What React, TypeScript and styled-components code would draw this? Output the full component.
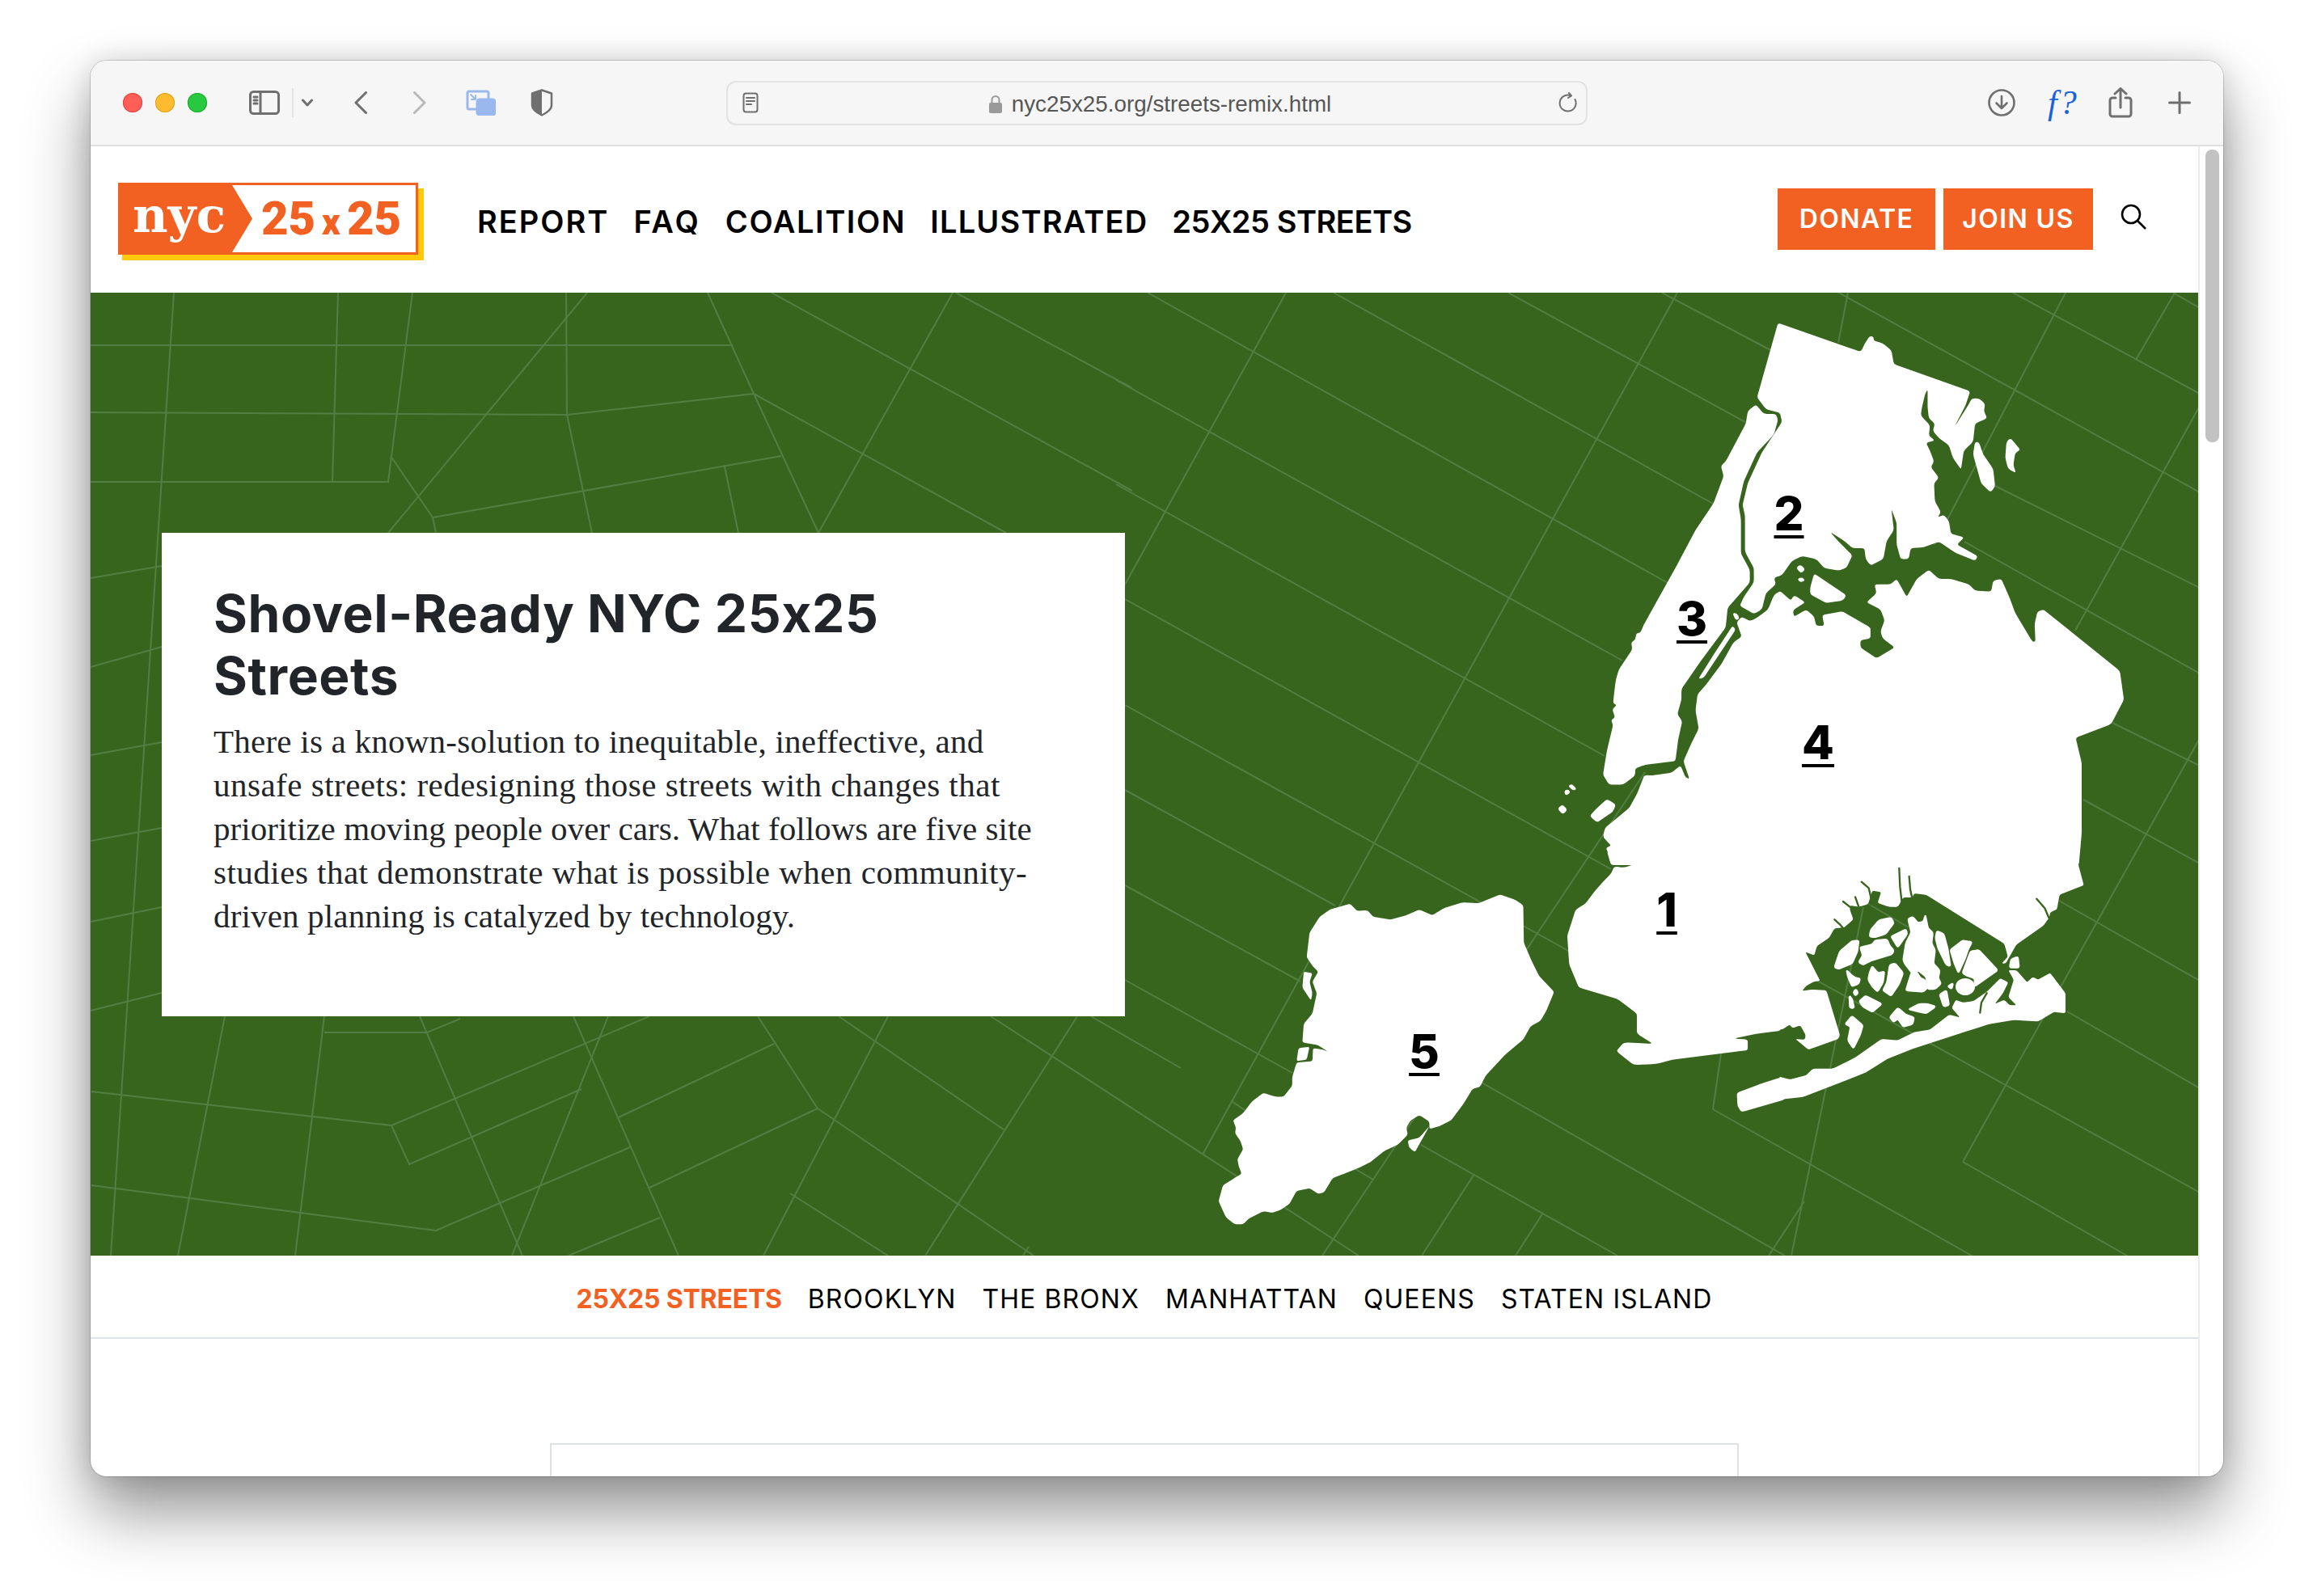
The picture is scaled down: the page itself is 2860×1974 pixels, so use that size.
import React from "react";
import styled, { createGlobalStyle } from "styled-components";

const GlobalStyle = createGlobalStyle`
  html, body {
    margin: 0;
    background: #fff;
    width: 2860px;
    height: 1974px;
    overflow: hidden;
  }
  * { box-sizing: border-box; }
`;

const ORANGE = "#f26022";
const GREEN = "#38651e";
const SANS = `Inter, "Liberation Sans", sans-serif`;

// street grid in page pixels
const STREETS = [
  "112,427 906,427", "112,510 701,513 932,487", "112,596 480,596 510,362",
  "215,362 137,1553", "418,362 411,596", "700,362 701,513 732,659",
  "726,362 480,659", "875,362 932,487 1012,659", "954,362 1400,607", "1178,362 1012,659",
  "1182,362 1400,480", "932,487 1244,659", "966,564 535,640 539,659", "896,577 913,659",
  "483,564 535,640", "112,715 200,700", "112,825 200,800", "112,934 200,918",
  "112,1040 200,1024", "112,1140 200,1122", "112,1250 200,1228",
  "401,1277 528,1277 569,1260", "401,1257 365,1553", "278,1257 220,1553",
  "113,1350 484,1392 506,1440 719,1347", "484,1392 803,1257",
  "113,1466 539,1522 779,1419", "765,1382 957,1291", "803,1469 1011,1371",
  "519,1257 646,1553", "709,1257 839,1553", "752,1257 633,1553",
  "937,1257 1011,1371 1278,1553", "1037,1257 1241,1397", "1098,1257 944,1553",
  "1332,1257 1144,1553", "816,1506 703,1553", "977,1476 1098,1553",
  "1225,1257 1680,1553", "1349,1257 1460,1321", "1272,1542 1265,1553",
  "1419,362 2064,722", "1649,362 2120,624", "1865,362 2158,522", "2055,362 2193,435",
  "1380,470 2006,817", "1380,599 1984,935", "1391,741 1992,1075", "1391,872 1970,1193",
  "1391,977 1651,1120", "1391,1095 1608,1214", "1391,1212 1598,1327",
  "1590,362 1391,723", "2074,362 1487,1428",
  "2034,955 1635,1553", "1823,1452 1758,1553", "1908,1500 1874,1553",
  "1757,1416 2000,1553", "1832,1339 2207,1553", "1676,1446 1698,1459",
  "1523,1362 1542,1375", "2285,362 2273,424", "2489,362 2720,487", "2687,362 2720,381",
  "2270,360 2720,609", "2689,362 2641,445", "2554,362 2392,673", "2720,502 2566,780",
  "2467,601 2720,727", "2429,670 2720,833", "2612,894 2720,947", "2576,989 2720,1068",
  "2546,1114 2720,1213", "2556,1251 2720,1346", "2247,1213 2720,1475",
  "2427,1437 2630,1553", "2720,913 2427,1437", "2118,1372 2128,1303", "2118,1372 2438,1553",
  "2304,1122 2215,1553", "2231,1486 2187,1553", "2310,1118 2360,1147",
];

const UPPER = [
  // bronx
  "600,66 806,146 815,125 828,102 838,104 838,115 860,122 882,142 888,180 1078,255 1066,295 1045,340 1040,352 1075,290 1082,275 1100,275 1115,290 1112,310 1120,330 1090,345 1085,395 1062,420 1055,472 1035,440 1025,405 1000,385 985,365 990,345 975,330 972,300 972,250 966,262 958,300 955,322 978,350 975,378 990,392 968,398 978,420 988,450 980,465 1000,495 988,510 990,560 1005,590 997,605 1012,597 1025,615 1030,650 1063,660 1045,680 1097,712 1090,725 1040,702 1000,672 960,688 930,690 925,720 905,720 895,680 895,620 882,582 888,640 870,670 862,720 830,738 818,720 815,690 785,690 765,670 730,645 745,665 785,710 770,745 750,752 715,745 695,720 660,712 635,725 610,765 590,772 595,790 570,815 560,860 540,872 505,850 515,825 540,785 540,745 518,700 518,600 512,570 525,510 560,425 610,340 605,315 570,305 548,272",
  // manhattan
  "545,292 525,310 520,345 470,450 458,462 465,490 440,565 395,640 345,745 280,875 265,905 258,925 248,925 245,945 235,950 238,970 205,1025 198,1050 195,1070 190,1120 200,1125 188,1135 195,1160 185,1165 190,1180 175,1250 165,1318 180,1345 215,1345 245,1320 245,1300 270,1290 345,1280 352,1220 362,1170 350,1150 360,1110 360,1080 410,1000 470,910 475,855 495,830 530,785 530,750 508,705 508,610 502,570 515,505 548,425 590,375 600,335 595,318 565,318",
  // queens and north brooklyn
  "510,935 490,950 460,1010 420,1070 400,1095 395,1140 403,1190 385,1230 365,1280 380,1330 370,1325 358,1292 335,1312 285,1320 268,1318 250,1370 230,1410 170,1465 165,1490 190,1520 175,1530 185,1568 1348,1568 1355,1480 1355,1285 1340,1215 1428,1178 1460,1110 1450,1030 1260,860 1245,865 1238,900 1240,950 1232,948 1190,870 1175,825 1155,775 1135,780 1130,810 1090,808 1075,790 1030,775 1000,775 975,750 945,775 920,825 895,775 880,790 840,790 845,815 820,840 855,860 865,890 855,920 860,940 890,965 845,995 805,965 805,945 830,940 830,910 760,865 710,875 715,905 695,905 690,880 670,860 640,880 637,862 668,840 640,820 632,835 605,808 590,820 575,860 545,885 530,892 510,880 497,895",
  // small islands
  "487,905 495,915 415,1050 402,1052 440,985",
  "487,870 498,870 505,885 495,890",
  "680,800 690,760 770,820 762,835 720,842 680,818",
  "645,745 655,735 668,748 658,760",
  "648,775 660,770 668,780 655,785",
  "1168,395 1178,385 1203,418 1190,425 1185,460 1192,482 1172,470 1165,440",
  "1090,395 1100,397 1110,430 1135,470 1140,520 1128,535 1105,510 1095,470 1085,430",
  "150,1410 175,1385 197,1400 190,1420 150,1450 132,1432",
  "52,1412 64,1400 77,1415 65,1428",
  "68,1362 80,1358 84,1368 72,1376",
  "78,1348 88,1343 100,1358 90,1362",
];

const LOWER_WEST = [
  "710,0 670,75 680,130 672,135 678,170 690,195 702,175 705,150 715,165 725,145 720,190 700,205 685,200 680,225 665,260 655,285 640,330 625,350 612,440 615,540 630,620 690,660 720,710 720,780 745,815 700,810 688,840 715,888 750,885 775,870 880,840 892,838 892,800 870,797 905,780 943,770 943,0",
  "875,985 910,955 945,930 950,1008 882,1052 876,1030",
];

const BAY_SHORE = [
  "0,640 12,640 38,622 50,635 78,625 98,660 95,678 60,675 108,715 220,675 225,660 175,495 120,492 85,497 100,478 130,462 152,460 97,352 130,365 140,330 185,300 205,265 235,262 240,262 275,232 262,195 262,180 295,185 330,175 345,125 378,130 365,170 405,185 440,185 460,150 495,150 500,135 545,140 835,322 848,370 825,395 840,395 880,325 980,255 1002,225 1005,205 1030,195 1040,140 1130,105 1110,30 1115,-100 0,-100",
  // rockaway
  "1062,505 1062,580 1020,575 960,610 870,605 780,620 670,655 500,710 400,750 320,800 270,820 90,890 0,900 0,815 40,825 100,810 125,785 200,785 280,745 380,675 440,680 500,650 560,640 630,585 670,595 640,560 655,530 680,540 720,535 770,500 800,470 820,450 850,465 830,505 800,545 835,530 855,550 880,550 850,520 870,455 850,420 880,420 920,465 940,445 960,455 1005,430",
];

const BAY_ISLES = [
  "340,270 370,235 415,225 425,245 395,285 355,298 335,295",
  "415,295 470,268 475,285 440,335",
  "205,410 225,350 270,312 295,310 290,350 270,395 220,415",
  "300,335 345,325 355,310 400,305 410,330 425,345 420,360 340,385 310,400 295,390 310,365",
  "478,230 495,222 515,245 535,240 542,215 552,265 570,280 565,320 578,345 572,395 595,420 590,450 600,470 578,490 552,490 545,445 515,420 500,440 465,395 460,380 470,320 490,280",
  "585,275 610,285 625,340 635,405 620,400 590,340 580,300",
  "635,345 680,310 715,315 700,345 690,375 665,430 650,395",
  "680,430 710,350 740,345 810,420 725,480 725,450 695,440",
  "250,420 270,440 285,450 300,450 295,470 270,480 255,445",
  "335,430 345,405 365,430 390,425 385,465 365,500 345,480 330,455",
  "410,400 430,395 460,430 445,470 415,515 385,495 400,465",
  "470,495 490,430 505,420 525,450 540,455 555,480 535,500",
  "297,535 320,515 380,545 345,575 310,555",
  "260,515 270,525 278,560 262,560",
  "275,500 285,490 293,505 282,515",
  "410,595 440,560 470,585 500,595 495,620 460,630 440,600 425,612",
  "480,565 520,545 550,545 580,555 545,580 520,575",
  "595,510 620,495 630,550 610,555",
  "625,480 645,468 640,490",
  "245,620 270,590 310,625 300,660 275,710 255,680 265,630",
  "860,380 885,370 890,410 855,410",
];

// narrow creeks cutting into the bay shore
const BAY_CREEKS = [
  "445,42 448,110 455,170",
  "482,72 486,120 492,148",
  "305,92 332,115 340,150 338,178",
  "237,165 262,185 288,190",
  "282,148 296,188",
  "205,232 225,250 240,268",
  "955,155 985,190 1000,225",
  "745,578 750,540 770,505",
];

const STATEN = [
  "705,375 740,350 810,330 835,355 870,352 890,375 950,385 1005,370 1050,350 1095,370 1135,345 1200,325 1255,328 1330,298 1380,315 1410,335 1412,465 1440,530 1465,580 1517,635 1490,700 1470,735 1435,755 1410,800 1350,850 1280,925 1260,965 1235,970 1205,1020 1160,1080 1120,1100 1085,1110 1085,1085 1050,1062 1020,1080 1005,1105 1010,1130 975,1165 930,1185 880,1225 840,1245 790,1265 750,1280 720,1330 700,1335 670,1315 625,1325 600,1370 570,1390 540,1400 510,1395 460,1420 440,1440 410,1440 380,1415 355,1360 370,1305 410,1280 435,1265 425,1240 420,1215 440,1180 430,1150 412,1125 415,1105 405,1080 440,1055 470,1015 510,985 550,998 580,998 610,960 610,930 625,880 680,875 682,830 715,835 733,842 700,820 645,810 650,745 680,710 695,640 680,600 700,565 680,545 660,515 670,430",
  "650,565 680,570 670,600 680,640 675,665 645,620",
  "632,830 670,825 660,870 625,875",
  "1010,1150 1050,1140 1085,1100 1060,1145 1035,1190 1015,1175",
];

// polygon with small rounded corners so the coast doesn't look cut with scissors
const coast = (raw: string, r = 7) => {
  const pts = raw.split(" ").map((p) => p.split(",").map(Number));
  let d = "";
  pts.forEach((p, i) => {
    const prev = pts[(i - 1 + pts.length) % pts.length];
    const next = pts[(i + 1) % pts.length];
    const toward = (q: number[]) => {
      const len = Math.hypot(q[0] - p[0], q[1] - p[1]) || 1;
      const t = Math.min(r, len / 2) / len;
      return `${p[0] + (q[0] - p[0]) * t} ${p[1] + (q[1] - p[1]) * t}`;
    };
    d += `${i ? "L" : "M"}${toward(prev)}Q${p[0]} ${p[1]} ${toward(next)}`;
  });
  return d + "Z";
};

const BAY_TF = "translate(2200 1060) scale(0.3333)";

const LAND = [
  { tf: "translate(1900 370) scale(0.4974 0.4464)", shapes: UPPER, grow: 0 },
  { tf: "translate(1450 1000) scale(0.7972 0.3571)", shapes: LOWER_WEST, grow: 0 },
  { tf: BAY_TF, shapes: BAY_SHORE, grow: 0 },
  { tf: "translate(1380 1000) scale(0.3571)", shapes: STATEN, grow: 0 },
];

const PINS = [
  { n: 1, x: 2061, y: 1090 },
  { n: 2, x: 2212, y: 600 },
  { n: 3, x: 2092, y: 730 },
  { n: 4, x: 2248, y: 883 },
  { n: 5, x: 1761, y: 1265 },
];

const MAIN_LINKS = [
  { label: "REPORT", spacing: 2 },
  { label: "FAQ", spacing: 3 },
  { label: "COALITION", spacing: 1.6 },
  { label: "ILLUSTRATED", spacing: 1.2 },
  { label: "25X25 STREETS", spacing: -0.46 },
];

const INTRO_LINES = [
  { text: "There is a known-solution to inequitable, ineffective, and", spacing: 0.24 },
  { text: "unsafe streets: redesigning those streets with changes that", spacing: 0.49 },
  { text: "prioritize moving people over cars. What follows are five site", spacing: 0.06 },
  { text: "studies that demonstrate what is possible when community-", spacing: 0.49 },
  { text: "driven planning is catalyzed by technology.", spacing: 0.16 },
];

const Stage = styled.div`
  width: 2860px;
  height: 1974px;
  padding: 75px 111px 148px 112px;
`;

const Window = styled.div`
  width: 2637px;
  height: 1751px;
  border-radius: 20px;
  overflow: hidden;
  background: #fff;
  display: flex;
  flex-direction: column;
  box-shadow: 0 0 0 1px rgba(0, 0, 0, 0.16), 0 44px 80px rgba(0, 0, 0, 0.42), 0 0 34px rgba(0, 0, 0, 0.14);
`;

const Toolbar = styled.div`
  height: 106px;
  flex: none;
  display: flex;
  align-items: center;
  padding-left: 40px;
  background: #f6f6f6;
  border-bottom: 2px solid #e0e0e0;
`;

const Dot = styled.span<{ $c: string; $edge: string }>`
  width: 24px;
  height: 24px;
  border-radius: 50%;
  margin-right: 16px;
  background: ${(p) => p.$c};
  box-shadow: inset 0 0 0 1px ${(p) => p.$edge};
`;

const Tool = styled.svg<{ $ml: number; $w: number; $h: number }>`
  flex: none;
  margin-left: ${(p) => p.$ml}px;
  width: ${(p) => p.$w}px;
  height: ${(p) => p.$h}px;
  fill: none;
  stroke: #6f6f6f;
  stroke-width: 3;
  stroke-linecap: round;
  stroke-linejoin: round;
`;

const ToolDivider = styled.span`
  width: 2px;
  height: 36px;
  margin-left: 15px;
  background: #e4e4e4;
`;

const Address = styled.div`
  flex: none;
  width: 1065px;
  height: 55px;
  margin-left: 214px;
  padding: 0 10px 0 18px;
  display: grid;
  grid-template-columns: 1fr auto 1fr;
  align-items: center;
  border: 2.5px solid #e2e2e2;
  border-radius: 12px;
  background: #f6f6f6;
`;

const Url = styled.div`
  display: flex;
  align-items: center;
  gap: 12px;
  padding-top: 3px;
  font: 27.8px "Liberation Sans", sans-serif;
  color: #565656;
`;

const AddressEnd = styled.div`
  justify-self: end;
  display: flex;
`;

const FontQuery = styled.span`
  flex: none;
  width: 38px;
  margin-left: 40px;
  font: italic 400 42px "Liberation Serif", serif;
  letter-spacing: 3px;
  color: #1a62db;
  white-space: nowrap;
`;

const Body = styled.div`
  flex: 1;
  display: flex;
  min-height: 0;
`;

const Page = styled.div`
  width: 2606px;
  flex: none;
  overflow: hidden;
`;

const ScrollTrack = styled.div`
  flex: 1;
  padding: 4px 5px 0 7px;
  border-left: 2px solid #ececec;
`;

const ScrollThumb = styled.div`
  height: 362px;
  border-radius: 8px;
  background: #c2c2c2;
`;

const Nav = styled.header`
  height: 181px;
  display: flex;
  align-items: center;
  padding-left: 34px;
`;

const LogoMark = styled.svg`
  flex: none;
  width: 378px;
  height: 96px;
  margin-top: 5px;
`;

const MainLinks = styled.nav`
  display: flex;
  gap: 30px;
  margin-left: 66px;
  margin-top: 4px;
`;

const MainLink = styled.a<{ $spacing: number }>`
  font: 600 38px ${SANS};
  letter-spacing: ${(p) => p.$spacing}px;
  color: #000;
  white-space: nowrap;
`;

const Actions = styled.div`
  margin-left: auto;
  margin-right: 64px;
  display: flex;
  align-items: center;
  gap: 10px;
`;

const ActionButton = styled.a<{ $w: number }>`
  width: ${(p) => p.$w}px;
  height: 76px;
  display: flex;
  align-items: center;
  justify-content: center;
  background: ${ORANGE};
  color: #fff;
  font: 600 32px ${SANS};
  letter-spacing: 1.4px;
  margin-top: -2px;
`;

const SearchIcon = styled.svg`
  width: 32px;
  height: 32px;
  margin-left: 24px;
  margin-top: -8px;
  fill: none;
  stroke: #000;
  stroke-width: 2.6;
`;

const Hero = styled.section`
  position: relative;
  height: 1191px;
  padding: 297px 0 0 88px;
  background: ${GREEN};
  overflow: hidden;
`;

const MapArt = styled.svg`
  position: absolute;
  inset: 0;
  width: 2606px;
  height: 1191px;
`;

const Street = styled.polyline`
  fill: none;
  stroke: #527f41;
  stroke-width: 2;
`;

const Creek = styled.polyline`
  fill: none;
  stroke: ${GREEN};
  stroke-width: 7;
  stroke-linecap: round;
  stroke-linejoin: round;
`;

const MapPin = styled.a<{ $x: number; $y: number }>`
  position: absolute;
  left: ${(p) => p.$x - 112}px;
  top: ${(p) => p.$y - 362}px;
  transform: translateX(-50%);
  font: 800 58px/70px ${SANS};
  color: #000;
  text-decoration: underline;
  text-decoration-thickness: 4px;
  text-underline-offset: 6px;
`;

const IntroCard = styled.div`
  position: relative;
  width: 1191px;
  height: 598px;
  padding: 62px 64px;
  background: #fff;
  color: #212529;
`;

const IntroTitle = styled.h1`
  margin: 0 0 15px;
  font: 700 64px/76.8px ${SANS};
  letter-spacing: 0.6px;
`;

const IntroLine = styled.span<{ $spacing: number }>`
  display: block;
  letter-spacing: ${(p) => p.$spacing}px;
  white-space: nowrap;
`;

const IntroText = styled.p`
  margin: 0;
  font: 41px/54px "Liberation Serif", serif;
`;

const SubNav = styled.nav`
  height: 103px;
  padding-top: 5px;
  display: flex;
  align-items: center;
  justify-content: center;
  gap: 32px;
  border-bottom: 2.5px solid #dee2e6;
`;

const SubLink = styled.a<{ $active?: boolean }>`
  font: ${(p) => (p.$active ? 700 : 400)} 32px ${SANS};
  letter-spacing: ${(p) => (p.$active ? -0.2 : 1.1)}px;
  color: ${(p) => (p.$active ? ORANGE : "#000")};
  white-space: nowrap;
`;

const Below = styled.div`
  padding-top: 129px;
`;

const SheetTop = styled.div`
  width: 1470px;
  height: 200px;
  margin: 0 auto;
  border: 2.5px solid #dee2e6;
`;

export default function App() {
  return (
    <>
      <GlobalStyle />
      <Stage>
        <Window>
          <Toolbar>
            <Dot $c="#ff5f57" $edge="#e0443e" />
            <Dot $c="#febc2e" $edge="#dea123" />
            <Dot $c="#28c840" $edge="#1aab29" />
            <Tool $ml={36} $w={38} $h={30} viewBox="0 0 38 30">
              <rect x="1.5" y="1.5" width="35" height="27" rx="4" />
              <path d="M14 1.5v27M6 8h4M6 12h4M6 16h4" />
            </Tool>
            <ToolDivider />
            <Tool $ml={10} $w={14} $h={10} viewBox="0 0 14 10">
              <path d="M1.5 2l5.5 6 5.5-6" />
            </Tool>
            <Tool $ml={51} $w={16} $h={28} viewBox="0 0 16 28">
              <path d="M14.5 1.5L2 14l12.5 12.5" />
            </Tool>
            <Tool $ml={57} $w={16} $h={28} viewBox="0 0 16 28" style={{ stroke: "#b9b9b9" }}>
              <path d="M1.5 1.5L14 14 1.5 26.5" />
            </Tool>
            <Tool $ml={49} $w={37} $h={32} viewBox="0 0 37 32" style={{ stroke: "#9ab8ee" }}>
              <path d="M13 24H4a2 2 0 01-2-2V4a2 2 0 012-2h22a2 2 0 012 2v7" />
              <rect x="14" y="12" width="22" height="19" rx="3" fill="#9ab8ee" />
              <path d="M6 6l6 6M12 7v5H7" strokeWidth="2" />
            </Tool>
            <Tool $ml={43} $w={28} $h={34} viewBox="0 0 28 34">
              <path d="M14 1.5l12 4v15c0 5-6 9-12 12-6-3-12-7-12-12v-15z" strokeWidth="2.5" />
              <path d="M14 1.5v31c-6-3-12-7-12-12v-15z" fill="#6f6f6f" stroke="none" />
            </Tool>
            <Address>
              <Tool $ml={0} $w={20} $h={26} viewBox="0 0 20 26" style={{ strokeWidth: 2 }}>
                <rect x="1.5" y="1.5" width="17" height="23" rx="3" />
                <path d="M5 7h10M5 11h10M5 15h6" />
              </Tool>
              <Url>
                <svg width="16" height="23" viewBox="0 0 16 23">
                  <path d="M3.5 10V6.5a4.5 4.5 0 019 0V10" fill="none" stroke="#9a9a9a" strokeWidth="2" />
                  <rect x="0" y="10" width="16" height="13" rx="2" fill="#9a9a9a" />
                </svg>
                nyc25x25.org/streets-remix.html
              </Url>
              <AddressEnd>
                <Tool $ml={0} $w={24} $h={26} viewBox="0 0 24 26" style={{ strokeWidth: 2 }}>
                  <path d="M20.5 9a10 10 0 11-6-5M13 1l3 3.5-4 2.5" />
                </Tool>
              </AddressEnd>
            </Address>
            <Tool $ml={495} $w={34} $h={34} viewBox="0 0 34 34" style={{ strokeWidth: 2.6 }}>
              <circle cx="17" cy="17" r="15.5" />
              <path d="M17 9v15M10.5 17.5L17 24l6.5-6.5" />
            </Tool>
            <FontQuery>f?</FontQuery>
            <Tool $ml={37} $w={30} $h={38} viewBox="0 0 30 38">
              <path d="M9 13H5a3 3 0 00-3 3v17a3 3 0 003 3h20a3 3 0 003-3V16a3 3 0 00-3-3h-4M15 25V2M8 8l7-6.5L22 8" />
            </Tool>
            <Tool $ml={44} $w={28} $h={28} viewBox="0 0 28 28">
              <path d="M14 1.5v25M1.5 14h25" />
            </Tool>
          </Toolbar>
          <Body>
            <Page>
              <Nav>
                <LogoMark viewBox="0 0 378 96">
                  <rect x="5" y="7" width="373" height="89" fill="#ffc90d" />
                  <rect x="0" y="0" width="371" height="89" fill={ORANGE} />
                  <path d="M141 3h227v83H141l25-41.5z" fill="#fff" />
                  <text x="18" y="61" fontFamily="DejaVu Serif" fontWeight="700" fontSize="60" fill="#fff" textLength="115" lengthAdjust="spacingAndGlyphs">nyc</text>
                  <text y="64" fontFamily="Roboto" fontWeight="900" fontSize="58" fill={ORANGE}>
                    <tspan x="177">25</tspan>
                    <tspan x="252" fontSize="44">x</tspan>
                    <tspan x="283">25</tspan>
                  </text>
                </LogoMark>
                <MainLinks>
                  {MAIN_LINKS.map((l) => (
                    <MainLink key={l.label} $spacing={l.spacing}>{l.label}</MainLink>
                  ))}
                </MainLinks>
                <Actions>
                  <ActionButton $w={195}>DONATE</ActionButton>
                  <ActionButton $w={185}>JOIN US</ActionButton>
                  <SearchIcon viewBox="0 0 32 32">
                    <circle cx="13" cy="13" r="11" />
                    <path d="M21 21l10 10" />
                  </SearchIcon>
                </Actions>
              </Nav>
              <Hero>
                <MapArt viewBox="112 362 2606 1191">
                  {STREETS.map((s) => (
                    <Street key={s} points={s} />
                  ))}
                  {LAND.map((group) => (
                    <g key={group.tf} transform={group.tf} fill="#fff">
                      {group.shapes.map((s) => (
                        <path key={s} d={coast(s)} />
                      ))}
                    </g>
                  ))}
                  <g transform={BAY_TF}>
                    {BAY_CREEKS.map((s) => (
                      <Creek key={s} points={s} />
                    ))}
                    <g fill="#fff" stroke="#fff" strokeWidth="6">
                      {BAY_ISLES.map((s) => (
                        <path key={s} d={coast(s)} />
                      ))}
                    </g>
                  </g>
                  <ellipse cx="2430" cy="1220.5" rx="12" ry="10.5" fill="#fff" />
                </MapArt>
                {PINS.map((p) => (
                  <MapPin key={p.n} $x={p.x} $y={p.y}>{p.n}</MapPin>
                ))}
                <IntroCard>
                  <IntroTitle>
                    Shovel-Ready NYC 25x25
                    <br />
                    Streets
                  </IntroTitle>
                  <IntroText>
                    {INTRO_LINES.map((l) => (
                      <IntroLine key={l.text} $spacing={l.spacing}>{l.text}</IntroLine>
                    ))}
                  </IntroText>
                </IntroCard>
              </Hero>
              <SubNav>
                <SubLink $active>25X25 STREETS</SubLink>
                {["BROOKLYN", "THE BRONX", "MANHATTAN", "QUEENS", "STATEN ISLAND"].map((t) => (
                  <SubLink key={t}>{t}</SubLink>
                ))}
              </SubNav>
              <Below>
                <SheetTop />
              </Below>
            </Page>
            <ScrollTrack>
              <ScrollThumb />
            </ScrollTrack>
          </Body>
        </Window>
      </Stage>
    </>
  );
}
